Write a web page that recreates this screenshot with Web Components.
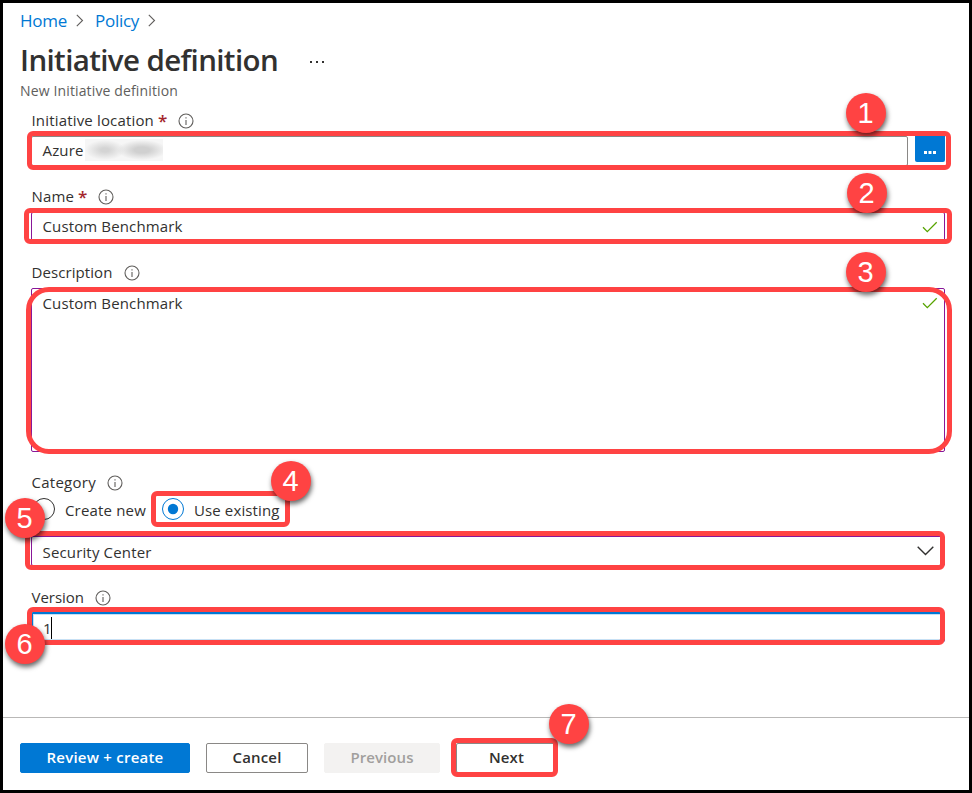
<!DOCTYPE html>
<html lang="en"><head><meta charset="utf-8"><title>Initiative definition</title>
<style>
html,body{margin:0;height:100%}
body{font-family:"Open Sans","Noto Sans",sans-serif;font-size:15px;color:#323130;background:#fff;overflow:hidden}
</style></head><body>
<policy-page></policy-page>
<script>
function define(name, html, init){
  customElements.define(name, class extends HTMLElement{
    connectedCallback(){
      if(this.shadowRoot) return;
      this.attachShadow({mode:'open'}).innerHTML = html;
      if(init) init(this, this.shadowRoot);
    }
  });
}

define('policy-page', `
<style>
:host{display:flex;flex-direction:column;position:relative;box-sizing:border-box;width:972px;height:793px;border:3px solid #000;background:#fff}
nav{height:36px;padding-left:17px;display:flex;align-items:center;color:#0078d4;gap:9px;font-size:17px}
nav fit-text{padding-bottom:2px}
nav svg{margin-right:2px}
header{height:43px;padding-left:17px;display:flex;align-items:center;gap:32px}
h1{margin:0;font-size:29.5px;font-weight:600;line-height:41px;padding-bottom:2px}
.sub{padding-left:17px;height:18px;line-height:18px;font-size:14px;color:#605e5c;margin-bottom:10px}
main{padding-left:28px;width:914px;flex:1;display:flex;flex-direction:column;gap:20px}
.row{display:flex;gap:7px}
.row ui-input{flex:1}
.browse{width:30px;height:30px;margin-top:-4px;background:#0078d4;border-radius:2px;display:flex;align-items:center;justify-content:center;box-sizing:border-box;padding-top:10px}
.redact{width:78px;height:22px;margin-left:1px;background:radial-gradient(ellipse 20px 10px at 20px 11px,#d4d4d4 20%,#d4d4d400),radial-gradient(ellipse 25px 10px at 57px 11px,#d0d0d0 30%,#d0d0d000),#f6f6f6}
.radios{display:flex;height:32px;align-items:center;margin-top:-4px;margin-bottom:10px}
.caret{width:1px;height:22px;background:#000;margin-left:0}
footer{height:73px;border-top:1px solid #b9b8b7;display:flex;padding:25px 0 0 17px;gap:16px;box-sizing:border-box}
</style>
<nav><fit-text w="47">Home</fit-text><chevron-icon></chevron-icon><fit-text w="44">Policy</fit-text><chevron-icon></chevron-icon></nav>
<header><h1><fit-text w="258">Initiative definition</fit-text></h1>
<svg width="16" height="6" fill="#323130"><rect x="0" y="3" width="2" height="2"/><rect x="6" y="3" width="2" height="2"/><rect x="12" y="3" width="2" height="2"/></svg></header>
<div class="sub"><fit-text w="158">New Initiative definition</fit-text></div>
<main>
<form-field label="Initiative location" w="122.5" required><div class="row"><ui-input><fit-text w="41">Azure</fit-text><span class="redact"></span></ui-input><div class="browse"><svg width="12" height="3" fill="#fff"><rect width="3" height="3"/><rect x="4.5" width="3" height="3"/><rect x="9" width="3" height="3"/></svg></div></div></form-field>
<form-field label="Name" w="42.5" required><ui-input valid><fit-text w="140">Custom Benchmark</fit-text></ui-input></form-field>
<form-field label="Description" w="81"><ui-input valid multiline><fit-text w="140">Custom Benchmark</fit-text></ui-input></form-field>
<form-field label="Category" w="64.5"><div class="radios"><radio-option><fit-text w="81">Create new</fit-text></radio-option><radio-option checked style="margin-left:14px"><fit-text w="85.5">Use existing</fit-text></radio-option></div>
<ui-input valid dropdown><fit-text w="109">Security Center</fit-text></ui-input></form-field>
<form-field label="Version" w="52.5" style="margin-top:1px;--gap:3px"><ui-input focused><fit-text w="8">1</fit-text><span class="caret"></span></ui-input></form-field>
</main>
<footer>
<ui-button kind="primary" style="width:170px"><fit-text w="117">Review + create</fit-text></ui-button>
<ui-button style="width:102px"><fit-text w="49">Cancel</fit-text></ui-button>
<ui-button kind="disabled" style="width:116px"><fit-text w="63">Previous</fit-text></ui-button>
<ui-button style="width:101px"><fit-text w="35">Next</fit-text></ui-button>
</footer>
<call-frame box="27,131,924,39"></call-frame>
<call-frame box="24,208,928,36"></call-frame>
<call-frame box="26,287,926,167,23"></call-frame>
<call-frame box="151,491,139,36"></call-frame>
<call-frame box="25,531,920,39"></call-frame>
<call-frame box="27,607,918,38"></call-frame>
<call-frame box="451,738,107,39"></call-frame>
<step-badge at="866,113">1</step-badge><step-badge at="867,193">2</step-badge><step-badge at="866,272">3</step-badge>
<step-badge at="291,481">4</step-badge><step-badge at="25,518">5</step-badge><step-badge at="25,644">6</step-badge><step-badge at="569,724">7</step-badge>
`);

define('chevron-icon', `<style>:host{display:block;width:8px;height:13px;margin-right:2px;margin-top:-2px}svg{display:block}</style>
<svg width="8" height="13" fill="none" stroke="#605e5c" stroke-width="1.1"><path d="M.8.8 6.5 6.5.8 12.2"/></svg>`);

define('form-field', `
<style>
:host{display:block}
.label{height:22px;display:flex;align-items:center;padding-left:.5px;margin-bottom:var(--gap,4px)}
.label fit-text{padding-bottom:2px}
.req{color:#a4262c;font-weight:600;font-size:17px;margin-left:4px;width:9px;line-height:20px;height:20px}
svg{margin-left:11px;margin-top:-1px}
</style>
<div class="label"><fit-text></fit-text><span class="req">*</span>
<svg width="16" height="16" fill="none" stroke="#605e5c"><circle cx="8" cy="8" r="7" stroke-width="1.1"/><path d="M8 7v5M8 4.2v1.4" stroke-width="1.1"/></svg></div>
<slot></slot>`, (el, root) => {
  const t = root.querySelector('fit-text');
  t.textContent = el.getAttribute('label');
  t.setAttribute('w', el.getAttribute('w'));
  if(!el.hasAttribute('required')) root.querySelector('.req').remove();
});

define('ui-input', `
<style>
:host{display:flex;align-items:center;box-sizing:border-box;height:30px;border:1px solid #8a8886;border-radius:2px;padding:0 7px 2px 10.5px;background:#fff}
:host([valid]){border-color:#881798}
:host([dropdown]){padding-top:3px}
:host([multiline]){height:164px;align-items:flex-start;padding-top:4px}
:host([focused]){border:2px solid #0078d4;padding:1px 7px 0 10px;box-shadow:inset 0 0 0 1px #c7e0f4}
.icon{margin-left:auto;display:none}
:host([valid]:not([dropdown])) .check{display:block;margin-right:-1px;margin-top:2px}
:host([multiline]) .check{margin-top:4px!important}
:host([dropdown]) .down{display:block;margin-right:3px;margin-top:-1px}
</style><slot></slot>
<svg class="icon check" width="16" height="12" fill="none" stroke="#57a300" stroke-width="1.3"><path d="M1 6.3 5.3 10.6 14.7 1.2"/></svg>
<svg class="icon down" width="17" height="10" fill="none" stroke="#323130" stroke-width="1.4"><path d="M.7.8 8.5 8.6 16.3.8"/></svg>`);

define('radio-option', `
<style>
:host{display:flex;align-items:center;padding-left:.5px}
svg{margin-right:9.5px;margin-top:-2px}
circle{fill:none;stroke:#323130}
:host([checked]) .o{stroke:#0078d4}
.i{display:none}
:host([checked]) .i{display:block;fill:#0078d4;stroke:none}
</style><svg width="24" height="24"><circle class="o" cx="12" cy="12" r="10.5"/><circle class="i" cx="12" cy="12" r="5.2"/></svg><slot></slot>`);

define('ui-button', `
<style>
:host{display:flex;align-items:center;justify-content:center;box-sizing:border-box;height:30px;border:1px solid #8a8886;border-radius:2px;font-weight:600;padding-bottom:2px}
:host([kind=primary]){background:#0078d4;border-color:#0078d4;color:#fff}
:host([kind=disabled]){background:#f3f2f1;border-color:#f3f2f1;color:#a19f9d}
</style><slot></slot>`);

/* Annotation frame; box is "x,y,width,height[,radius]" in page coordinates. */
define('call-frame', `<style>:host{position:absolute;box-sizing:border-box;border:5px solid #ff4343}</style>`, el => {
  const [x,y,w,h,r=6] = el.getAttribute('box').split(',').map(Number);
  Object.assign(el.style,{left:x-3+'px',top:y-3+'px',width:w+'px',height:h+'px',borderRadius:r+'px'});
});

define('step-badge', `<style>:host{position:absolute;width:39px;padding-right:1px;height:40px;border-radius:50%;background:#ff4343;color:#fff;
font:29px/41px "Liberation Sans",sans-serif;text-align:center;box-shadow:1px 3px 5px rgba(0,0,0,.6)}</style><slot></slot>`, el => {
  const [x,y] = el.getAttribute('at').split(',').map(Number);
  Object.assign(el.style,{left:x-23+'px',top:y-23+'px'});
});

/* Text run tracked so that it fills the width given in "w". */
define('fit-text', `<style>:host{display:inline-block;white-space:nowrap}span{display:inline-block}</style><span><slot></slot></span>`, (el, root) => {
  const s = root.querySelector('span'), w = +el.getAttribute('w');
  el.style.width = w + 'px';
  s.style.letterSpacing = (w - s.getBoundingClientRect().width) / el.textContent.length + 'px';
});
</script>
</body></html>
